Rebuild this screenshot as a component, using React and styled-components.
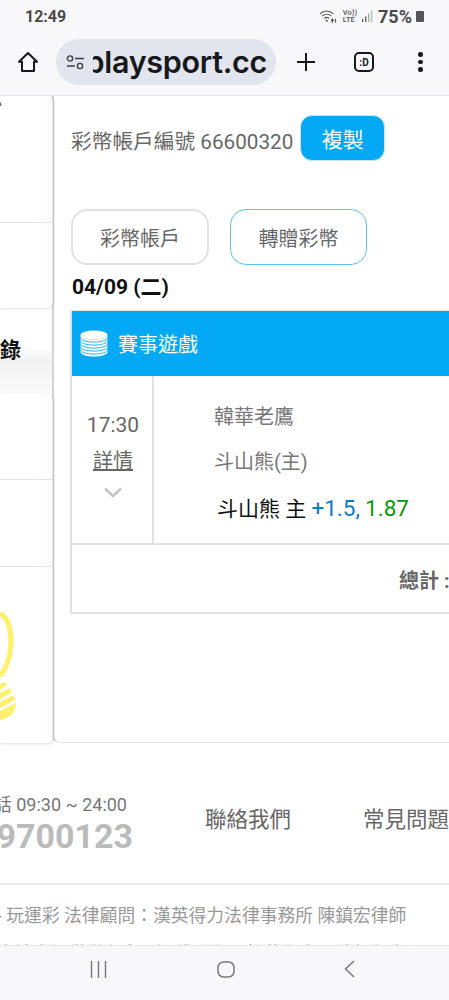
import React from "react";
import styled, { createGlobalStyle } from "styled-components";

const CJK = `Roboto, "Noto Sans CJK TC", sans-serif`;

const GlobalStyle = createGlobalStyle`
  html, body {
    margin: 0;
    padding: 0;
    background: #fff;
    font-family: ${CJK};
  }
`;

function WifiIcon() {
  return (
    <svg width="20" height="15" viewBox="0 0 17 14" fill="none" stroke="#555" strokeWidth="1.1">
      <path d="M1 4.5C4.5 1 10 1 13.5 4.5" />
      <path d="M3 6.7C5.5 4.3 9 4.3 11.5 6.7" />
      <path d="M5 8.8C6.4 7.6 8.1 7.6 9.5 8.8" />
      <circle cx="7.3" cy="11" r="1" fill="#555" stroke="none" />
      <path d="M12.5 13v-3.5M11.2 10.8l1.3-1.4 1.3 1.4M15.5 9v3.6" />
    </svg>
  );
}

function SignalIcon() {
  return (
    <svg width="11" height="12" viewBox="0 0 11 12">
      <rect x="0" y="9" width="1.4" height="3" fill="#666" />
      <rect x="3" y="6.5" width="1.4" height="5.5" fill="#666" />
      <rect x="6" y="3.5" width="1.4" height="8.5" fill="#aaa" />
      <rect x="9" y="0.5" width="1.4" height="11.5" fill="#bbb" />
    </svg>
  );
}

function HomeIcon() {
  return (
    <svg width="22" height="22" viewBox="0 0 22 22" fill="none" stroke="#17181c" strokeWidth="2" strokeLinejoin="round">
      <path d="M11 2 2 10.8h3V20h12v-9.2h3z" />
    </svg>
  );
}

function TuneIcon() {
  return (
    <svg width="19" height="15" viewBox="0 0 19 15" fill="none" stroke="#3c3f46" strokeWidth="1.4">
      <circle cx="4" cy="3.5" r="2.6" />
      <path d="M9 3.5h9M1 11h8" />
      <circle cx="14" cy="11" r="2.6" />
    </svg>
  );
}

function PlusIcon() {
  return (
    <svg width="20" height="20" viewBox="0 0 20 20" stroke="#17181c" strokeWidth="2">
      <path d="M10 1v18M1 10h18" />
    </svg>
  );
}

function CoinStack() {
  return (
    <svg width="28" height="27" viewBox="0 0 28 27">
      <ellipse cx="14" cy="5" rx="13.5" ry="4.6" fill="#fff" />
      <path d="M.5 5v17c0 2.6 6 4.6 13.5 4.6S27.5 24.6 27.5 22V5c0 2.6-6 4.6-13.5 4.6S.5 7.6.5 5z" fill="#fff" />
      <g fill="none" stroke="#03a9f4" strokeWidth="0.9">
        <path d="M.5 7.5c0 2.6 6 4.6 13.5 4.6s13.5-2 13.5-4.6" />
        <path d="M.5 10.5c0 2.6 6 4.6 13.5 4.6s13.5-2 13.5-4.6" />
        <path d="M.5 13.5c0 2.6 6 4.6 13.5 4.6s13.5-2 13.5-4.6" />
        <path d="M.5 16.5c0 2.6 6 4.6 13.5 4.6s13.5-2 13.5-4.6" />
        <path d="M.5 19.5c0 2.6 6 4.6 13.5 4.6s13.5-2 13.5-4.6" />
      </g>
    </svg>
  );
}

function Chevron() {
  return (
    <svg width="18" height="11" viewBox="0 0 18 11" fill="none" stroke="#c4c4c4" strokeWidth="2.4">
      <path d="M1 1.5 9 9l8-7.5" />
    </svg>
  );
}

function Bulb() {
  return (
    <svg width="18" height="112" viewBox="0 0 18 112" fill="none">
      <path d="M0 1C7 5 11 16 11 30 11 46 5 58 0 64" stroke="#fff06a" strokeWidth="5" />
      <g fill="#fff06a">
        <path d="M0 72 5 70 7 73 0 78z" />
        <path d="M0 81 10 76 12 80 0 87z" />
        <path d="M0 90 14 83 15 88 0 96z" />
        <path d="M0 99 16 91C16 100 10 106 0 108z" />
      </g>
    </svg>
  );
}

function App() {
  return (
    <>
      <GlobalStyle />
      <Screen>
        <StatusBar>
          <Clock>12:49</Clock>
          <StatusIcons>
            <WifiIcon />
            <VoLte>
              <span>Vo))</span>
              <span>LTE</span>
            </VoLte>
            <SignalIcon />
            <Battery>75%</Battery>
            <BatteryIcon />
          </StatusIcons>
        </StatusBar>

        <BrowserBar>
          <HomeIcon />
          <AddressPill>
            <TuneIcon />
            <UrlClip>
              <Url>playsport.cc</Url>
            </UrlClip>
          </AddressPill>
          <PlusButton>
            <PlusIcon />
          </PlusButton>
          <TabCount>:D</TabCount>
          <MenuDots>
            <i />
            <i />
            <i />
          </MenuDots>
        </BrowserBar>

        <Viewport>
          <Columns>
            <Sidebar>
              <SideCard $height={212}>
                <Caret>^</Caret>
                <SideRow $height={126} $line />
                <SideRow $height={86} />
              </SideCard>
              <ActiveRow>
                <ActiveLabel>錄</ActiveLabel>
              </ActiveRow>
              <SideCard $height={349}>
                <SideRow $height={85} $line />
                <SideRow $height={86} $line />
                <BulbRow>
                  <Bulb />
                </BulbRow>
              </SideCard>
            </Sidebar>

            <Main>
              <AccountRow>
                <AccountText>彩幣帳戶編號 66600320</AccountText>
                <CopyButton>複製</CopyButton>
              </AccountRow>

              <Tabs>
                <TabButton>彩幣帳戶</TabButton>
                <TabButton $active>轉贈彩幣</TabButton>
              </Tabs>

              <DateLabel>04/09 (二)</DateLabel>

              <GameTable>
                <GameHeader>
                  <CoinStack />
                  <GameTitle>賽事遊戲</GameTitle>
                </GameHeader>
                <GameRow>
                  <TimeCell>
                    <TimeText>17:30</TimeText>
                    <DetailLink>詳情</DetailLink>
                    <Chevron />
                  </TimeCell>
                  <TeamCell>
                    <TeamName>韓華老鷹</TeamName>
                    <TeamName>斗山熊(主)</TeamName>
                    <Pick>
                      斗山熊 主 <Spread>+1.5,</Spread> <Odds>1.87</Odds>
                    </Pick>
                  </TeamCell>
                </GameRow>
                <TotalRow>
                  <TotalLabel>總計 : 100</TotalLabel>
                </TotalRow>
              </GameTable>
            </Main>
          </Columns>

          <Footer>
            <FooterTop>
              <PhoneBlock>
                <PhoneHours>電話 09:30 ~ 24:00</PhoneHours>
                <PhoneNumber>9700123</PhoneNumber>
              </PhoneBlock>
              <FooterLink>聯絡我們</FooterLink>
              <FooterLink>常見問題</FooterLink>
            </FooterTop>
            <LegalText>
              <LegalLine>- 玩運彩 法律顧問：漢英得力法律事務所 陳鎮宏律師</LegalLine>
              <LegalLine>本站資訊僅供參考，版權所有，轉載必究，請勿任意使用</LegalLine>
            </LegalText>
          </Footer>
        </Viewport>

        <NavBar>
          <svg width="17" height="17" viewBox="0 0 17 17" stroke="#77787c" strokeWidth="1.4">
            <path d="M1.5 0v17M8.5 0v17M15.5 0v17" />
          </svg>
          <svg width="18" height="17" viewBox="0 0 18 17" fill="none" stroke="#77787c" strokeWidth="1.5">
            <rect x="1" y="1" width="16" height="15" rx="5.5" />
          </svg>
          <svg width="11" height="18" viewBox="0 0 11 18" fill="none" stroke="#77787c" strokeWidth="1.5">
            <path d="M10 1 1.5 9l8.5 8" />
          </svg>
        </NavBar>
      </Screen>
    </>
  );
}

const Screen = styled.div`
  width: 449px;
  height: 1000px;
  display: flex;
  flex-direction: column;
  overflow: hidden;
  background: #fff;
`;

const StatusBar = styled.div`
  height: 32px;
  box-sizing: border-box;
  padding: 0 25px;
  display: flex;
  align-items: center;
  justify-content: space-between;
  background: #f8f8fb;
`;

const Clock = styled.span`
  font-size: 16px;
  font-weight: 700;
  color: #4a4a4c;
`;

const StatusIcons = styled.div`
  display: flex;
  align-items: center;
  column-gap: 5px;
`;

const VoLte = styled.span`
  display: flex;
  flex-direction: column;
  font-size: 7.5px;
  line-height: 7px;
  font-weight: 500;
  color: #555;
`;

const Battery = styled.span`
  font-size: 18px;
  font-weight: 700;
  color: #4a4a4c;
`;

const BatteryIcon = styled.span`
  width: 8px;
  height: 11px;
  background: #555;
  border-radius: 1px;
  margin-left: -1px;
`;

const BrowserBar = styled.div`
  height: 64px;
  box-sizing: border-box;
  padding: 0 0 3px 17px;
  display: flex;
  align-items: center;
  background: #f8f8fb;
  border-bottom: 1px solid #e2e2e6;
`;

const AddressPill = styled.div`
  width: 220px;
  height: 46px;
  margin-left: 17px;
  box-sizing: border-box;
  padding: 0 9px 0 10px;
  display: flex;
  align-items: center;
  column-gap: 8px;
  border-radius: 23px;
  background: #e2e5ee;
`;

const UrlClip = styled.div`
  flex: 1;
  min-width: 0;
  display: flex;
  justify-content: flex-end;
  overflow: hidden;
`;

const Url = styled.span`
  flex: none;
  font-family: Inter, Roboto, sans-serif;
  font-size: 30.5px;
  font-weight: 600;
  letter-spacing: -0.3px;
  line-height: 40px;
  color: #17181c;
  white-space: nowrap;
`;

const PlusButton = styled.span`
  display: flex;
  margin-left: 20px;
`;

const TabCount = styled.span`
  width: 20px;
  height: 20px;
  margin-left: 38px;
  box-sizing: border-box;
  display: flex;
  align-items: center;
  justify-content: center;
  border: 2px solid #17181c;
  border-radius: 5px;
  font-size: 10px;
  font-weight: 700;
  color: #17181c;
`;

const MenuDots = styled.span`
  display: flex;
  flex-direction: column;
  row-gap: 3px;
  margin-left: 44px;

  i {
    width: 4.5px;
    height: 4.5px;
    border-radius: 50%;
    background: #17181c;
  }
`;

const Viewport = styled.div`
  flex: 1;
  min-height: 0;
  overflow: hidden;
  display: flex;
  flex-direction: column;
`;

const Columns = styled.div`
  height: 647px;
  flex: none;
  display: flex;
`;

const Sidebar = styled.div`
  width: 53px;
  flex: none;
  display: flex;
  flex-direction: column;
`;

const SideCard = styled.div`
  position: relative;
  height: ${(p) => p.$height}px;
  flex: none;
  box-sizing: border-box;
  display: flex;
  flex-direction: column;
  border-radius: 0 5px 5px 0;
  border-right: 1px solid #e4e4e4;
  box-shadow: 1px 1px 3px rgba(0, 0, 0, 0.12);
  background: linear-gradient(to left, #fcfcfc, #fff 30%);
`;

const Caret = styled.span`
  position: absolute;
  left: -3px;
  top: 4px;
  font-size: 12px;
  color: #333;
`;

const SideRow = styled.div`
  height: ${(p) => p.$height}px;
  flex: none;
  border-bottom: ${(p) => (p.$line ? "1px solid #e4e4e4" : "none")};
`;

const ActiveRow = styled.div`
  height: 86px;
  flex: none;
  box-sizing: border-box;
  padding-top: 27px;
  background: linear-gradient(to bottom, #fff 45%, #f1f1f1 62%, #fbfbfb 100%);
`;

const ActiveLabel = styled.div`
  font-size: 21px;
  line-height: 30px;
  font-weight: 700;
  color: #111;
`;

const BulbRow = styled.div`
  display: flex;
  padding-top: 45px;
`;

const Main = styled.div`
  flex: 1;
  min-width: 0;
  box-sizing: border-box;
  padding: 19px 0 0 17px;
  border-left: 2px solid #d4d4d4;
  border-bottom: 1px solid #e6e6e6;
  border-bottom-left-radius: 8px;
  margin-left: -1px;
`;

const AccountRow = styled.div`
  display: flex;
  align-items: center;
  column-gap: 7px;
`;

const AccountText = styled.span`
  padding-top: 4px;
  font-size: 20.7px;
  color: #666;
  white-space: nowrap;
`;

const CopyButton = styled.button`
  width: 85px;
  height: 46px;
  padding: 0;
  box-sizing: border-box;
  background: #03a9f4;
  border: 1px solid #cfe3ee;
  border-radius: 12px;
  font-family: ${CJK};
  font-size: 21px;
  color: #fff;
`;

const Tabs = styled.div`
  display: flex;
  column-gap: 21px;
  margin-top: 48px;
`;

const TabButton = styled.button`
  width: ${(p) => (p.$active ? "137px" : "138px")};
  height: 56px;
  padding: 0;
  box-sizing: border-box;
  background: #fff;
  border: ${(p) => (p.$active ? "1px solid #62c3ec" : "2px solid #e2e2e2")};
  border-radius: 16px;
  font-family: ${CJK};
  font-size: 20px;
  color: #666;
`;

const DateLabel = styled.div`
  margin: 8px 0 9px 1px;
  font-size: 21px;
  line-height: 28px;
  font-weight: 700;
  color: #111;
`;

const GameTable = styled.div`
  width: 440px;
  margin-left: -1px;
  box-sizing: border-box;
  border: 2px solid #e2e2e2;
  border-top-width: 1px;
`;

const GameHeader = styled.div`
  height: 65px;
  box-sizing: border-box;
  padding: 0 0 0 8px;
  display: flex;
  align-items: center;
  column-gap: 10px;
  background: #03a9f4;
`;

const GameTitle = styled.span`
  font-size: 20px;
  color: #fff;
`;

const GameRow = styled.div`
  height: 169px;
  display: flex;
  border-bottom: 2px solid #e2e2e2;
  box-sizing: border-box;
`;

const TimeCell = styled.div`
  width: 82px;
  flex: none;
  box-sizing: border-box;
  padding: 33px 0 0 2px;
  display: flex;
  flex-direction: column;
  align-items: center;
  border-right: 2px solid #e2e2e2;
`;

const TimeText = styled.span`
  font-size: 21px;
  line-height: 32px;
  color: #666;
`;

const DetailLink = styled.span`
  margin: 6px 0 12px;
  font-size: 20px;
  line-height: 28px;
  color: #666;
  text-decoration: underline;
`;

const TeamCell = styled.div`
  flex: 1;
  box-sizing: border-box;
  padding: 27px 0 0 60px;
  display: flex;
  flex-direction: column;
  row-gap: 17px;
`;

const TeamName = styled.span`
  font-size: 20px;
  line-height: 28px;
  color: #777;
`;

const Pick = styled.div`
  margin: 0 0 0 3px;
  font-size: 21px;
  line-height: 30px;
  color: #111;
  white-space: nowrap;
`;

const Spread = styled.span`
  font-size: 22.5px;
  color: #0a7cc4;
`;

const Odds = styled.span`
  font-size: 22.5px;
  color: #0a960a;
`;

const TotalRow = styled.div`
  height: 67px;
  box-sizing: border-box;
  padding: 22px 0 0 327px;
  white-space: nowrap;
`;

const TotalLabel = styled.span`
  font-size: 20px;
  line-height: 28px;
  font-weight: 700;
  color: #666;
`;

const Footer = styled.div`
  flex: 1;
  min-height: 0;
  overflow: hidden;
`;

const FooterTop = styled.div`
  height: 142px;
  box-sizing: border-box;
  padding-top: 50px;
  margin-left: -40px;
  width: 540px;
  display: flex;
  column-gap: 72px;
  border-bottom: 2px solid #e8e8e8;
`;

const PhoneBlock = styled.div`
  width: 173px;
  flex: none;
  display: flex;
  flex-direction: column;
  align-items: flex-end;
`;

const PhoneHours = styled.span`
  font-size: 18px;
  line-height: 24px;
  color: #777;
  white-space: nowrap;
  margin-right: 6px;
`;

const PhoneNumber = styled.span`
  font-size: 34px;
  line-height: 38px;
  font-weight: 700;
  color: #bbb;
`;

const FooterLink = styled.span`
  margin-top: 12px;
  font-size: 21.5px;
  line-height: 30px;
  color: #666;
  white-space: nowrap;
`;

const LegalText = styled.div`
  margin-left: -3px;
  padding-top: 18px;
  display: flex;
  flex-direction: column;
  row-gap: 12px;
`;

const LegalLine = styled.span`
  font-size: 17.8px;
  line-height: 26px;
  color: #999;
  white-space: nowrap;
`;

const NavBar = styled.div`
  position: relative;
  height: 55px;
  flex: none;
  box-sizing: border-box;
  padding: 0 94px 8px 90px;
  display: flex;
  align-items: center;
  justify-content: space-between;
  background: #f8f8fb;
  border-top: 1px solid #e6e6ea;
`;

export default App;
